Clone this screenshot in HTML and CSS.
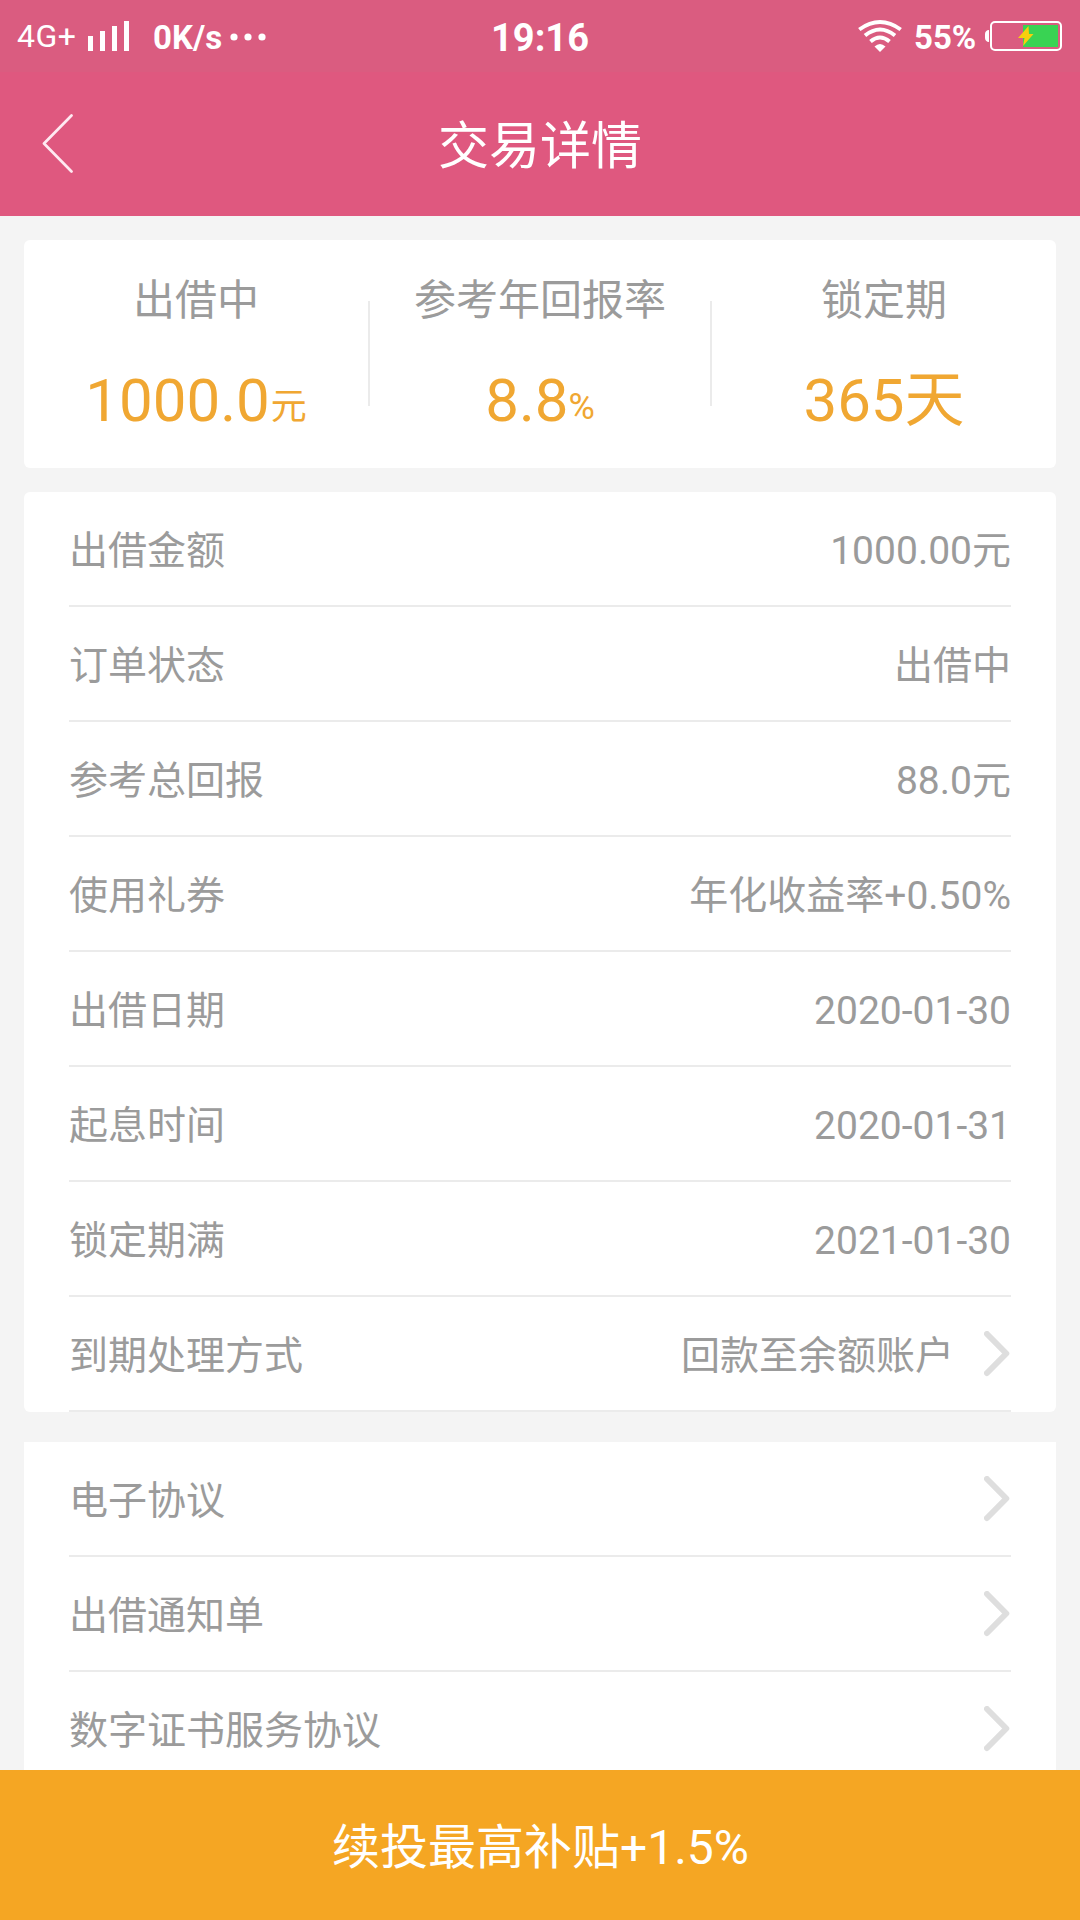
FILE: index.html
```html
<!DOCTYPE html>
<html lang="zh-CN">
<head>
<meta charset="utf-8">
<title>交易详情</title>
<link rel="stylesheet" href="styles.css">
</head>
<body>
<div class="screen">
  <div class="status-bar">
    <div class="status-left">
      <span class="network">4G+</span>
      <svg class="signal" width="41" height="30" viewBox="0 0 41 30" fill="#fff"><path d="M0 15h5v15H0zM12 10h5v20h-5zM24 5h5v25h-5zM36 0h5v30h-5z"/></svg>
      <span class="speed">0K/s</span>
      <svg class="dots" width="36" height="8" viewBox="0 0 36 8" fill="#fff"><circle cx="4" cy="4" r="3.6"/><circle cx="18" cy="4" r="3.6"/><circle cx="32" cy="4" r="3.6"/></svg>
    </div>
    <div class="clock">19:16</div>
    <div class="status-right">
      <svg class="wifi" width="46" height="34" viewBox="0 0 46 34">
        <g fill="none" stroke="#fff" stroke-width="4"><path d="M2.300 10.500Q23 -4.500 43.700 10.500"/><path d="M8 16.500Q23 4.500 38 16.500"/><path d="M13.500 22.500Q23 14.500 32.500 22.500"/></g>
        <path d="M17.500 27.500Q23 22.500 28.500 27.500L23 33Z" fill="#fff"/>
      </svg>
      <span class="percent">55%</span>
      <svg class="battery" width="77" height="30" viewBox="0 0 77 30">
        <path d="M4 9v12C1.500 21 0 19 0 17v-4c0-2 1.500-4 4-4z" fill="#fff"/>
        <rect x="6" y="1" width="70" height="28" rx="4" fill="none" stroke="#fff" stroke-width="2"/>
        <path d="M38 4h35v22H38z" fill="#39d353"/>
        <path d="M43.500 5L33 17h6.500l-1.500 8 10.500-12H44z" fill="#f8cf0c"/>
      </svg>
    </div>
  </div>
  <header class="nav">
    <svg class="back" width="32" height="60" viewBox="0 0 32 60"><path d="M29.500 1.500L2 29.500l27.500 28" fill="none" stroke="#ffeaf2" stroke-width="2.700" stroke-linecap="round" stroke-linejoin="round"/></svg>
    <h1 class="nav-title">交易详情</h1>
  </header>
  <main class="content">
    <section class="card summary">
      <div class="stat"><div class="stat-label">出借中</div><div class="stat-value">1000.0<small class="yuan">元</small></div></div>
      <div class="stat-line"></div>
      <div class="stat"><div class="stat-label">参考年回报率</div><div class="stat-value">8.8<small>%</small></div></div>
      <div class="stat-line"></div>
      <div class="stat"><div class="stat-label">锁定期</div><div class="stat-value">365天</div></div>
    </section>
    <section class="card details">
      <div class="row"><span class="text">出借金额</span><span class="text">1000.00元</span></div>
      <div class="row"><span class="text">订单状态</span><span class="text">出借中</span></div>
      <div class="row"><span class="text">参考总回报</span><span class="text">88.0元</span></div>
      <div class="row"><span class="text">使用礼券</span><span class="text">年化收益率+0.50%</span></div>
      <div class="row"><span class="text">出借日期</span><span class="text">2020-01-30</span></div>
      <div class="row"><span class="text">起息时间</span><span class="text">2020-01-31</span></div>
      <div class="row"><span class="text">锁定期满</span><span class="text">2021-01-30</span></div>
      <div class="row"><span class="text">到期处理方式</span><div class="with-arrow"><span class="text">回款至余额账户</span><svg class="arrow" width="27" height="46" viewBox="0 0 27 46"><path d="M3 3L22.300 22.500 3 42"/></svg></div></div>
    </section>
    <section class="card links">
      <div class="row"><span class="text">电子协议</span><svg class="arrow" width="27" height="46" viewBox="0 0 27 46"><path d="M3 3L22.300 22.500 3 42"/></svg></div>
      <div class="row"><span class="text">出借通知单</span><svg class="arrow" width="27" height="46" viewBox="0 0 27 46"><path d="M3 3L22.300 22.500 3 42"/></svg></div>
      <div class="row"><span class="text">数字证书服务协议</span><svg class="arrow" width="27" height="46" viewBox="0 0 27 46"><path d="M3 3L22.300 22.500 3 42"/></svg></div>
    </section>
  </main>
  <footer class="renew">续投最高补贴+1.5%</footer>
</div>
</body>
</html>
```
FILE: styles.css
```css
* { box-sizing: border-box; }
body {
  margin: 0;
  font-family: Roboto, "Noto Sans CJK SC", sans-serif;
  color: #9b9b9b;
}
.screen {
  width: 1080px;
  height: 1920px;
  display: flex;
  flex-direction: column;
  overflow: hidden;
  background: #f4f4f4;
}
.status-bar {
  height: 72px;
  flex: none;
  display: grid;
  grid-template-columns: 1fr auto 1fr;
  background: #da5c80;
  color: #fff;
  line-height: 72px;
}
.status-left, .status-right { display: flex; align-items: flex-start; }
.status-left { padding-left: 17px; }
.status-right { justify-content: flex-end; padding-right: 18px; }
.network { width: 71px; font-size: 32px; letter-spacing: 0.5px; }
.signal { margin-top: 21px; }
.speed { margin-left: 24px; width: 77px; font-size: 33px; font-weight: 700; padding-top: 2px; }
.dots { margin-top: 33px; }
.clock { font-size: 38px; font-weight: 700; padding-top: 2px; }
.wifi { margin: 19px 11px 0 0; }
.percent { width: 71px; font-size: 33px; font-weight: 700; padding-top: 2px; }
.battery { margin-top: 21px; }
.nav {
  height: 144px;
  flex: none;
  display: grid;
  grid-template-columns: 120px 1fr 120px;
  align-items: center;
  background: #df587f;
  color: #fff;
}
.back { margin-left: 42px; }
.nav-title {
  margin: 0;
  padding-top: 6px;
  font-size: 51px;
  font-weight: 400;
  line-height: 74px;
  text-align: center;
}
.content {
  flex: 1;
  min-height: 0;
  overflow: hidden;
  padding: 24px 24px 0;
}
.card { background: #fff; border-radius: 6px; }
.summary {
  height: 228px;
  margin-bottom: 24px;
  display: grid;
  grid-template-columns: 344px 2px 1fr 2px 344px;
  align-items: start;
  text-align: center;
}
.stat { padding-top: 31px; white-space: nowrap; }
.stat-label { font-size: 42px; line-height: 60px; }
.stat-value {
  margin-top: 28px;
  font-size: 60px;
  line-height: 84px;
  color: #f0a732;
}
.stat-value small { font-size: 36px; line-height: 36px; vertical-align: 2px; }
.stat-value .yuan { margin-left: 1px; }
.stat-line { height: 105px; margin-top: 61px; background: #ebebeb; }
.details { padding: 0 45px; margin-bottom: 30px; }
.links { padding: 0 45px; border-radius: 0; }
.row {
  height: 115px;
  display: flex;
  align-items: center;
  justify-content: space-between;
  border-bottom: 2px solid #ebebeb;
  font-size: 39px;
  line-height: 56px;
}
.text { padding-top: 4px; }
.with-arrow { display: flex; align-items: center; gap: 30px; }
.arrow { fill: none; stroke: #dedede; stroke-width: 6px; stroke-linecap: round; stroke-linejoin: round; }
.renew {
  height: 150px;
  flex: none;
  padding: 3px 0 0 1px;
  background: #f5a623;
  color: #fff;
  font-size: 48px;
  line-height: 150px;
  text-align: center;
}
```
